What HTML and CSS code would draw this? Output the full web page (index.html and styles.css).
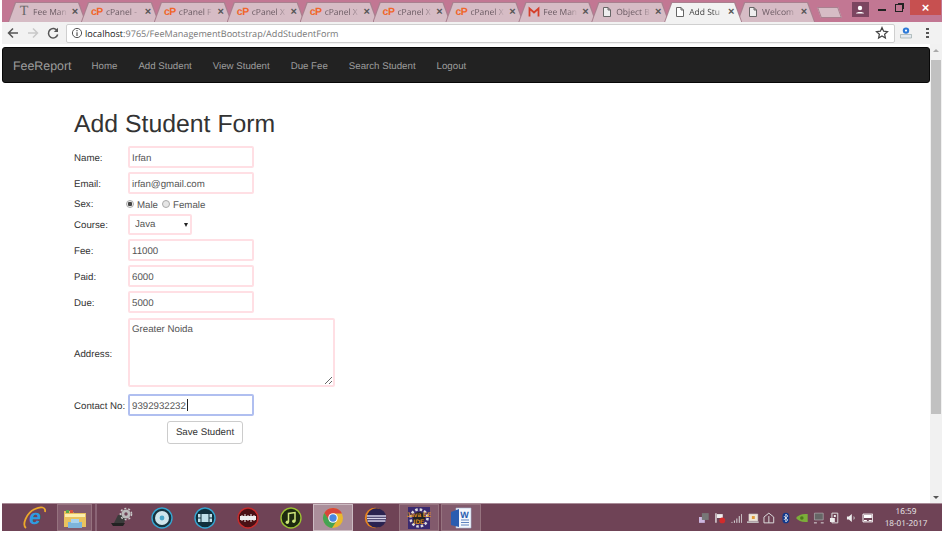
FILE: index.html

```html
<!DOCTYPE html>
<html lang="en">
<head>
    <meta charset="UTF-8">
    <title>Add Student Form</title>
    <link rel="stylesheet" href="styles.css">
</head>
<body>
    <div class="window">
        <!-- browser tabs -->
        <div class="tabstrip">
            <div class="tab"><span class="tab-text-icon">T</span><span class="tab-title">Fee Man</span><span class="tab-close">×</span></div>
            <div class="tab"><span class="cp">cP</span><span class="tab-title">cPanel -</span><span class="tab-close">×</span></div>
            <div class="tab"><span class="cp">cP</span><span class="tab-title">cPanel F</span><span class="tab-close">×</span></div>
            <div class="tab"><span class="cp">cP</span><span class="tab-title">cPanel X</span><span class="tab-close">×</span></div>
            <div class="tab"><span class="cp">cP</span><span class="tab-title">cPanel X</span><span class="tab-close">×</span></div>
            <div class="tab"><span class="cp">cP</span><span class="tab-title">cPanel X</span><span class="tab-close">×</span></div>
            <div class="tab"><span class="cp">cP</span><span class="tab-title">cPanel X</span><span class="tab-close">×</span></div>
            <div class="tab">
                <svg class="tab-icon" viewBox="0 0 12 12"><path d="M1.5 10.5V2.5L6 6.5 10.5 2.5V10.5" fill="none" stroke="#d5402b" stroke-width="1.8"/></svg>
                <span class="tab-title">Fee Man</span><span class="tab-close">×</span>
            </div>
            <div class="tab">
                <svg class="tab-icon" viewBox="0 0 12 12"><path d="M2.5 1.5H7L9.5 4V10.5H2.5ZM7 1.5V4H9.5" fill="#eee" stroke="#666"/></svg>
                <span class="tab-title">Object B</span><span class="tab-close">×</span>
            </div>
            <div class="tab tab-active">
                <svg class="tab-icon" viewBox="0 0 12 12"><path d="M2.5 1.5H7L9.5 4V10.5H2.5ZM7 1.5V4H9.5" fill="#fff" stroke="#666"/></svg>
                <span class="tab-title">Add Stu</span><span class="tab-close">×</span>
            </div>
            <div class="tab">
                <svg class="tab-icon" viewBox="0 0 12 12"><path d="M2.5 1.5H7L9.5 4V10.5H2.5ZM7 1.5V4H9.5" fill="#eee" stroke="#666"/></svg>
                <span class="tab-title">Welcom</span><span class="tab-close">×</span>
            </div>
            <div class="newtab"></div>
            <div class="winbtns">
                <div class="win-user">
                    <svg viewBox="0 0 16 12" width="16" height="12"><circle cx="8" cy="4" r="2.2" fill="#fff"/><path d="M4 9.5c0-2 8-2 8 0z" fill="#fff"/></svg>
                </div>
                <div class="win-min"></div>
                <div class="win-max"></div>
                <div class="win-close">×</div>
            </div>
        </div>

        <!-- address bar -->
        <div class="toolbar">
            <svg class="tool-icon" viewBox="0 0 14 14"><path d="M12 7H2.5M7 2.5 2.5 7 7 11.5" fill="none" stroke="#555" stroke-width="1.5"/></svg>
            <svg class="tool-icon" viewBox="0 0 14 14"><path d="M2 7h9.5M7 2.5 11.5 7 7 11.5" fill="none" stroke="#c9c9c9" stroke-width="1.5"/></svg>
            <svg class="tool-icon" viewBox="0 0 14 14"><path d="M11.3 5A4.7 4.7 0 1 0 11.7 8.5" fill="none" stroke="#555" stroke-width="1.5"/><path d="M12 1.8V6H7.8z" fill="#555"/></svg>
            <div class="omnibox">
                <svg class="info" viewBox="0 0 12 12"><circle cx="6" cy="6" r="4.6" fill="none" stroke="#555"/><path d="M6 5.2V9M6 3v1.2" stroke="#555" stroke-width="1.2"/></svg>
                <span class="url"><b>localhost</b>:9765/FeeManagementBootstrap/AddStudentForm</span>
                <svg class="star" viewBox="0 0 14 14"><path d="M7 1.6 8.6 5.2 12.5 5.6 9.6 8.2 10.4 12 7 10 3.6 12 4.4 8.2 1.5 5.6 5.4 5.2z" fill="none" stroke="#444" stroke-width="1.2"/></svg>
            </div>
            <svg class="ext" viewBox="0 0 14 14"><circle cx="7" cy="4.6" r="3.2" fill="#2b79d8"/><circle cx="7" cy="4.6" r="1.1" fill="#fff"/><path d="M1.5 8.5h11v3.5h-11z" fill="#e4e8ee" stroke="#9aa"  stroke-width=".7"/></svg>
            <div class="menu-dots"><i></i><i></i><i></i></div>
        </div>

        <div class="viewport">
            <div class="page">
                <nav class="navbar">
                    <a class="brand" href="#">FeeReport</a>
                    <a href="#">Home</a>
                    <a href="#">Add Student</a>
                    <a href="#">View Student</a>
                    <a href="#">Due Fee</a>
                    <a href="#">Search Student</a>
                    <a href="#">Logout</a>
                </nav>

                <div class="container">
                    <h1>Add Student Form</h1>
                    <form class="student-form">
                        <label>Name:</label>
                        <input type="text" value="Irfan">
                        <label>Email:</label>
                        <input type="text" value="irfan@gmail.com">
                        <label class="sex-label">Sex:</label>
                        <div class="sex">
                            <input type="radio" name="sex" checked><span>Male</span>
                            <input type="radio" name="sex"><span>Female</span>
                        </div>
                        <label>Course:</label>
                        <div class="select-wrap">
                            <select><option>Java</option></select>
                        </div>
                        <label>Fee:</label>
                        <input type="text" value="11000">
                        <label>Paid:</label>
                        <input type="text" value="6000">
                        <label>Due:</label>
                        <input type="text" value="5000">
                        <label>Address:</label>
                        <textarea>Greater Noida</textarea>
                        <label>Contact No:</label>
                        <div class="focus-wrap">
                            <input class="focused" type="text" value="9392932232"><span class="caret"></span>
                        </div>
                        <div class="submit-cell"><button type="button">Save Student</button></div>
                    </form>
                </div>
            </div>
            <div class="scrollbar">
                <div class="arrow-up"></div>
                <div class="thumb"></div>
                <div class="arrow-down"></div>
            </div>
        </div>

        <!-- windows taskbar -->
        <div class="taskbar">
            <div class="task t-ie">
                <svg viewBox="0 0 26 26" width="26" height="26"><path d="M5 23C1 20 5 8 14 4 20 1 25 2 24 7" fill="none" stroke="#eda92a" stroke-width="1.8"/><text x="14" y="19" text-anchor="middle" class="ie-e">e</text></svg>
            </div>
            <div class="task t-folder btn">
                <svg viewBox="0 0 26 22" width="26" height="22"><path d="M2 4h8l2 2h12v14H2z" fill="#e9c25e"/><path d="M3 7h20v3H3z" fill="#fbeeb0"/><path d="M4 3h3v3H4z" fill="#5aa84f"/><path d="M8 3h3v3H8z" fill="#d5503c"/><path d="M6 15h14v6H6z" fill="#7db4dc"/><path d="M9 12h8v4H9z" fill="#a9d2ee"/></svg>
            </div>
            <div class="task-sep"></div>
            <div class="task t-laptop">
                <svg viewBox="0 0 24 22" width="24" height="22"><path d="M8 8h9l-3 8H4z" fill="#3b3b3b"/><path d="M1 16h14l-2 3H3z" fill="#222"/><circle cx="16" cy="7" r="4.6" fill="#bbb"/><circle cx="16" cy="7" r="1.7" fill="#6f4356"/><circle cx="16" cy="7" r="5.6" fill="none" stroke="#ccc" stroke-width="1.4" stroke-dasharray="2 2"/></svg>
            </div>
            <div class="task t-disc">
                <svg viewBox="0 0 22 22" width="22" height="22"><circle cx="11" cy="11" r="10" fill="#16333f" stroke="#35a7d3" stroke-width="1.4"/><circle cx="11" cy="11" r="7" fill="#cfe5ec"/><circle cx="11" cy="11" r="2.4" fill="#4ba6c8"/></svg>
            </div>
            <div class="task t-film">
                <svg viewBox="0 0 22 22" width="22" height="22"><circle cx="11" cy="11" r="10" fill="#10303d" stroke="#35a7d3" stroke-width="1.4"/><path d="M4 7h14v8H4z" fill="#bfe0ea"/><path d="M7 7v8M15 7v8" stroke="#10303d"/><path d="M4 11h3M15 11h3" stroke="#10303d"/></svg>
            </div>
            <div class="task t-wave">
                <svg viewBox="0 0 22 22" width="22" height="22"><circle cx="11" cy="11" r="10" fill="#4a1014" stroke="#c92c2c" stroke-width="1.4"/><path d="M3 9h16v4H3z" fill="#eee"/><path d="M5 8v6M8 7v8M11 8v6M14 7v8M17 8v6" stroke="#eee"/></svg>
            </div>
            <div class="task t-music">
                <svg viewBox="0 0 22 22" width="22" height="22"><circle cx="11" cy="11" r="10" fill="#1d2a10" stroke="#9bc232" stroke-width="1.4"/><path d="M8.5 15V6.5l6.5-1V14" fill="none" stroke="#cfe67a" stroke-width="1.5"/><circle cx="7.3" cy="15.2" r="1.7" fill="#cfe67a"/><circle cx="13.8" cy="14.2" r="1.7" fill="#cfe67a"/></svg>
            </div>
            <div class="task t-chrome btn btn-active">
                <svg viewBox="0 0 22 22" width="22" height="22"><circle cx="11" cy="11" r="10" fill="#e8b82f"/><path d="M11 1a10 10 0 0 0-8.7 5L6.700 13.500 11 6.500H20A10 10 0 0 0 11 1z" fill="#d8453a"/><path d="M2.300 6A10 10 0 0 0 10 21L14.500 14 7 13z" fill="#45a352"/><circle cx="11" cy="11" r="4.800" fill="#fff"/><circle cx="11" cy="11" r="3.700" fill="#4a87e0"/></svg>
            </div>
            <div class="task t-eclipse">
                <svg viewBox="0 0 24 22" width="24" height="22"><circle cx="11" cy="11" r="10.200" fill="#e8851e"/><circle cx="12.500" cy="11" r="9.800" fill="#2a2350"/><path d="M3 9h19M3 11.500h19M3.500 14h18" stroke="#d8d4ea" stroke-width="1.300"/></svg>
            </div>
            <div class="task t-java btn">
                <svg viewBox="0 0 24 24" width="24" height="24"><rect x="1" y="1" width="22" height="22" fill="#3a2a70"/><circle cx="12" cy="12" r="8.500" fill="none" stroke="#ddd" stroke-width="2.500" stroke-dasharray="2.500 2"/><circle cx="12" cy="12" r="6" fill="#222"/><text x="12" y="10.500" text-anchor="middle" class="java-text">Java EE</text><text x="12" y="18" text-anchor="middle" class="java-text">IDE</text></svg>
            </div>
            <div class="task t-word btn">
                <svg viewBox="0 0 24 22" width="24" height="22"><path d="M7 1h15v20H7z" fill="#f4f7fc" stroke="#a8b9d6" stroke-width=".6"/><path d="M12 13h8M12 15.500h8M12 18h8" stroke="#5f83c0"/><path d="M2 5 10 2v18l-8-2z" fill="#2a5db0"/><text x="15.500" y="11" text-anchor="middle" class="word-w">W</text></svg>
            </div>

            <div class="tray">
                <svg viewBox="0 0 12 12"><path d="M1 5h6v6H1z" fill="#cdb7e0"/><path d="M4 1h7v7H4z" fill="#777"/></svg>
                <svg viewBox="0 0 12 12"><path d="M2 1v10" stroke="#eee" stroke-width="1.300"/><path d="M3 2h6v4H3z" fill="#eee"/><circle cx="8.500" cy="8.500" r="3" fill="#d22b2b"/></svg>
                <svg viewBox="0 0 12 12"><path d="M1 10v1M3.500 8.500V11M6 6.500V11M8.500 4V11M11 2v9" stroke="#ddd"/></svg>
                <svg viewBox="0 0 12 12"><path d="M2 2h9v7H2z" fill="#efe6d6" stroke="#ddd" stroke-width=".6"/><path d="M5 4h3v3H5z" fill="#e29a3a"/><path d="M0 9.500h12V11H0z" fill="#ccc"/></svg>
                <svg viewBox="0 0 12 12"><path d="M6 1 11 5v6H1V5zM6 4v7" fill="none" stroke="#ddd"/></svg>
                <svg viewBox="0 0 12 12"><rect x="2.500" y=".5" width="7" height="11" rx="3.500" fill="#123a8c"/><path d="M4 4l4 4-2 2V2l2 2-4 4" fill="none" stroke="#fff" stroke-width=".8"/></svg>
                <svg viewBox="0 0 12 12"><path d="M0 6Q4 1 12 2V10Q4 11 0 6z" fill="#7cae3a"/><circle cx="6" cy="6" r="1.800" fill="#4d7a1c"/></svg>
                <svg viewBox="0 0 12 12"><path d="M1.500 1h9v7h-9z" fill="#666" stroke="#bbb" stroke-width=".6"/><path d="M1 11h3M8 11h3" stroke="#ddd"/></svg>
                <svg viewBox="0 0 12 12"><path d="M3 1h6v10H3z" fill="none" stroke="#ddd"/><path d="M5 3h2v2H5zM1 6h5v4H1z" fill="#eee"/></svg>
                <svg viewBox="0 0 12 12"><path d="M2 4.500h2L7 2v8L4 7.500H2z" fill="#eee"/><path d="M9 4.500Q10 6 9 7.500" fill="none" stroke="#ccc"/></svg>
                <svg viewBox="0 0 12 12"><path d="M1 2h10v8H1z" fill="none" stroke="#fff"/><path d="M2 3h8v3H2zM2 8h3v1H2zM7 8h3v1H7z" fill="#fff"/></svg>
                <div class="clock"><span>16:59</span><span>18-01-2017</span></div>
            </div>
        </div>
    </div>
</body>
</html>
```

FILE: styles.css

```css
* { box-sizing: border-box; }

html, body { margin: 0; height: 533px; overflow: hidden; background: #fff; }

body { font-family: "Liberation Sans", Arial, sans-serif; padding: 0 2px 2px; text-rendering: geometricPrecision; }

.window { height: 531px; display: flex; flex-direction: column; }

/* tab strip */
.tabstrip { height: 22px; display: flex; align-items: flex-end; padding: 2px 0 0 6px; background: #c27793; }

.tab { position: relative; flex: none; width: 78px; height: 20px; margin-right: -5.1px; display: flex; align-items: center; padding: 0 0 0 10px; font-family: "Open Sans", sans-serif; font-size: 8.5px; color: #6a5a62; background: #a9808f; clip-path: polygon(0 100%, 7px 0, 71px 0, 100% 100%); }
.tab::before { content: ""; position: absolute; inset: 1px 1px 0; background: #d6bcc5; clip-path: polygon(0 100%, 7px 0, calc(100% - 7px) 0, 100% 100%); }
.tab > * { position: relative; }
.tab-active { z-index: 2; color: #444; background: #a9808f; }
.tab-active::before { background: #f2f2f2; }

.tab-icon { width: 12px; height: 12px; flex: none; }
.tab-text-icon { width: 12px; font-family: "Liberation Serif", serif; font-size: 14px; line-height: 14px; color: #666; text-align: center; }
.cp { width: 12px; font-family: "Liberation Sans", sans-serif; font-weight: bold; font-size: 10.5px; letter-spacing: -.5px; color: #f0662a; text-align: center; }
.tab-title { width: 35px; margin-left: 3px; overflow: hidden; white-space: nowrap; -webkit-mask-image: linear-gradient(90deg, #000 70%, transparent 100%); mask-image: linear-gradient(90deg, #000 70%, transparent 100%); }
.tab-close { margin-left: 2px; width: 10px; font-family: "Liberation Sans", sans-serif; font-size: 11px; line-height: 12px; font-weight: bold; color: #555; text-align: center; }

.newtab { flex: none; width: 21px; height: 11px; margin: 0 0 4px 9px; background: #d6bcc5; border: 1px solid #a9808f; transform: skewX(20deg); }

.winbtns { flex: 1; align-self: flex-start; display: flex; margin-top: -2px; padding-left: 12px; }
.win-user { width: 17px; height: 15px; margin-top: 2px; background: #7b4560; display: flex; align-items: center; justify-content: center; }
.win-min { width: 8px; height: 2px; margin: 9px 0 0 9px; background: #222; }
.win-max { width: 8px; height: 8px; margin: 4px 0 0 9px; border: 1.500px solid #222; box-shadow: 2px -2px 0 -1px #222; }
.win-close { width: 31px; height: 15px; margin-left: 7px; background: #c75050; color: #fff; font-size: 13px; font-weight: bold; line-height: 15px; text-align: center; }

/* address bar */
.toolbar { height: 22px; display: flex; align-items: center; padding-left: 4px; background: #f2f2f2; }
.tool-icon { width: 14px; height: 14px; margin-right: 6px; flex: none; }
.omnibox { width: 829px; height: 19px; display: flex; align-items: center; padding: 0 4px; background: #fff; border: 1px solid #cfcfcf; border-radius: 2px; }
.info { width: 12px; height: 12px; flex: none; }
.url { margin-left: 2px; font-family: "Open Sans", sans-serif; font-size: 9.100px; color: #777; white-space: nowrap; }
.url b { font-weight: normal; color: #222; }
.star { width: 14px; height: 14px; margin-left: auto; margin-right: 1px; }
.ext { width: 14px; height: 14px; margin-left: 4px; flex: none; }
.menu-dots { width: 3px; margin-left: 13px; display: flex; flex-direction: column; gap: 2px; }
.menu-dots i { height: 2px; background: #555; }

/* page */
.viewport { flex: 1; min-height: 0; display: flex; }
.page { flex: 1; min-width: 0; padding-top: 3px; background: #fff; }

.navbar { height: 36px; display: flex; align-items: center; gap: 21px; padding: 2px 0 0 10px; background: #222; border: 1px solid #080808; border-radius: 3px; }
.navbar a { font-size: 9.700px; color: #9d9d9d; text-decoration: none; }
.navbar .brand { font-size: 12.400px; margin-right: -1px; }

.container { padding-left: 72px; }

h1 { margin: 26px 0 0; height: 37px; font-size: 24.800px; font-weight: normal; line-height: 32px; color: #333; }

.student-form { display: grid; grid-template-columns: 54px 1fr; align-items: center; row-gap: 4px; font-size: 9.700px; color: #333; }
.student-form label { display: block; padding-top: 2px; white-space: nowrap; }
.student-form input[type=text], .student-form textarea, .student-form select { font-family: inherit; font-size: 9.700px; color: #555; background: #fff; border: 2px solid #ffdfe4; border-radius: 2px; outline: 0; text-rendering: geometricPrecision; }
.student-form input[type=text] { width: 126px; height: 22px; padding: 2px 2px 0; }
.student-form textarea { display: block; width: 207px; height: 69px; margin: 1px 0 3px; padding: 4px 2px 3px; }

.student-form .sex-label { height: 12px; padding-top: 1px; }
.sex { height: 16px; margin: -2px 0 -2px -3px; display: flex; align-items: center; color: #555; padding-top: 2px; }
.sex input { appearance: none; width: 8px; height: 8px; margin: -2px 3px 0 1px; background: #e6e6e6; border: 1px solid #aaa; border-radius: 50%; }
.sex input:checked { background: radial-gradient(circle, #444 0 2px, #eee 2.500px); }
.sex span { margin-right: 3px; }

.select-wrap { position: relative; width: 64px; }
.select-wrap::after { content: ""; position: absolute; right: 4px; top: 9px; border: 2.500px solid transparent; border-top: 4px solid #222; border-bottom: 0; }
.student-form select { appearance: none; display: block; width: 64px; height: 21px; padding: 0 5px; }

.focus-wrap { position: relative; width: 126px; }
.student-form input.focused { display: block; border-color: #b0bff0; }
.caret { position: absolute; left: 59px; top: 5px; width: 1px; height: 12px; background: #222; }

.submit-cell { grid-column: 1 / 3; padding-left: 93px; margin-top: 1px; }
.submit-cell button { width: 76px; height: 23px; padding: 0; font-family: inherit; font-size: 9.700px; color: #333; background: #fff; border: 1px solid #ccc; border-radius: 3px; text-rendering: geometricPrecision; }

/* scrollbar */
.scrollbar { width: 12px; display: flex; flex-direction: column; align-items: center; background: #f1f1f1; }
.arrow-up { margin-top: 5px; border: 3px solid transparent; border-bottom: 3px solid #aaa; border-top: 0; }
.thumb { width: 10px; height: 354px; margin-top: 8px; background: #c1c1c1; }
.arrow-down { margin-top: auto; margin-bottom: 4px; border: 3px solid transparent; border-top: 3px solid #555; border-bottom: 0; }

/* taskbar */
.taskbar { height: 28px; display: flex; align-items: center; background: #6f4356; border-top: 1px solid #a98c98; }
.task { flex: none; display: flex; align-items: center; justify-content: center; height: 27px; }
.btn { background: #825a6c; border: 1px solid #96737f; }
.btn-active { background: #ab8f9b; border-color: #cdbcc3; }
.t-ie { width: 55px; padding-left: 9px; }
.t-folder { width: 35px; }
.task-sep { width: 2px; height: 27px; margin-left: 3px; background: #8a6475; }
.t-laptop { width: 43px; padding-left: 6px; }
.t-disc { width: 43px; }
.t-film { width: 43px; }
.t-wave { width: 43px; }
.t-music { width: 43px; }
.t-chrome { width: 40px; margin-left: 1px; }
.t-eclipse { width: 46px; }
.t-java { width: 40px; }
.t-word { width: 40px; margin-left: 2px; }

.ie-e { font-family: "Liberation Sans", sans-serif; font-weight: bold; font-style: italic; font-size: 21px; fill: #2d9ce0; }
.word-w { font-family: "Liberation Sans", sans-serif; font-weight: bold; font-size: 9px; fill: #2a5db0; }
.java-text { font-family: "Liberation Sans", sans-serif; font-weight: bold; font-size: 6.500px; fill: #d98a24; }

.tray { flex: 1; display: flex; align-items: center; justify-content: flex-end; gap: 4.700px; padding-right: 4px; }
.tray svg { width: 11.700px; height: 12px; flex: none; }
.clock { width: 64px; display: flex; flex-direction: column; align-items: center; gap: 2px; margin-left: -4px; font-family: "Open Sans", sans-serif; font-size: 8.200px; line-height: 10px; color: #eee; }
```
